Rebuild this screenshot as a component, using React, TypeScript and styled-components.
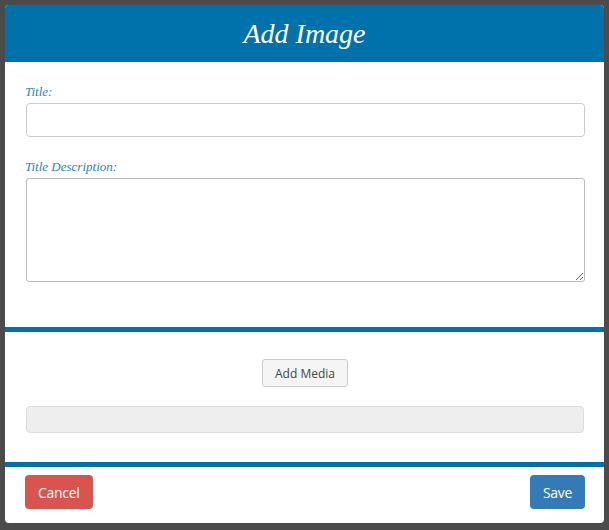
import React from 'react';
import styled, { createGlobalStyle } from 'styled-components';

const Global = createGlobalStyle`
  html, body { margin: 0; padding: 0; background: #4b4b4b; }
  body { width: 609px; height: 530px; overflow: hidden; font-family: "Open Sans", sans-serif; }
`;

const Backdrop = styled.div`
  padding: 5px 5px 0 5px;
`;

const Modal = styled.div`
  width: 599px;
  height: 518px;
  background: #fff;
  border-radius: 4px;
  overflow: hidden;
  display: flex;
  flex-direction: column;
`;

const Header = styled.div`
  height: 57px;
  flex-shrink: 0;
  background: #0072ab;
  color: #fff;
  display: flex;
  align-items: center;
  justify-content: center;
  font-family: "Liberation Serif", serif;
  font-style: italic;
  font-size: 28px;
`;

const Body = styled.div`
  padding: 22px 20px 0 20px;
  height: 265px;
  flex-shrink: 0;
  box-sizing: border-box;
`;

const Label = styled.label`
  display: block;
  font-family: "Liberation Serif", serif;
  font-style: italic;
  font-size: 13px;
  line-height: 15px;
  color: #2a86b3;
  margin-bottom: 4px;
`;

const Input = styled.input`
  display: block;
  width: 100%;
  height: 34px;
  box-sizing: border-box;
  border: 1px solid #ccc;
  border-radius: 4px;
  margin: 0 0 22px 1px;
`;

const TextArea = styled.textarea`
  display: block;
  width: 100%;
  height: 104px;
  box-sizing: border-box;
  border: 1px solid #bbb;
  border-radius: 3px;
  margin-left: 1px;
`;

const Rule = styled.div`
  height: 5px;
  flex-shrink: 0;
  background: #0072ab;
`;

const Media = styled.div`
  height: 130px;
  flex-shrink: 0;
  padding: 27px 20px 0 21px;
  box-sizing: border-box;
  display: flex;
  flex-direction: column;
  align-items: center;
`;

const MediaButton = styled.button`
  height: 28px;
  padding: 0 12px;
  background: #f5f5f5;
  border: 1px solid #ccc;
  border-radius: 3px;
  font-family: "Open Sans", sans-serif;
  font-size: 12px;
  color: #444;
  margin-bottom: 19px;
`;

const Progress = styled.div`
  width: 100%;
  height: 27px;
  background: #eee;
  border: 1px solid #ddd;
  border-radius: 4px;
  box-sizing: border-box;
`;

const Footer = styled.div`
  flex: 1;
  display: flex;
  justify-content: space-between;
  padding: 8px 19px 0 20px;
  align-items: flex-start;
`;

const Action = styled.button<{ $tone: string }>`
  height: 34px;
  padding: 0 13px;
  border: none;
  border-radius: 4px;
  background: ${p => p.$tone};
  color: #fff;
  font-family: "Open Sans", sans-serif;
  font-size: 14px;
  letter-spacing: -0.3px;
`;

export default function App() {
  return (
    <Backdrop>
      <Global />
      <Modal>
        <Header>Add Image</Header>
        <Body>
          <Label>Title:</Label>
          <Input />
          <Label>Title Description:</Label>
          <TextArea />
        </Body>
        <Rule />
        <Media>
          <MediaButton>Add Media</MediaButton>
          <Progress />
        </Media>
        <Rule />
        <Footer>
          <Action $tone="#d9534f">Cancel</Action>
          <Action $tone="#337ab7">Save</Action>
        </Footer>
      </Modal>
    </Backdrop>
  );
}
